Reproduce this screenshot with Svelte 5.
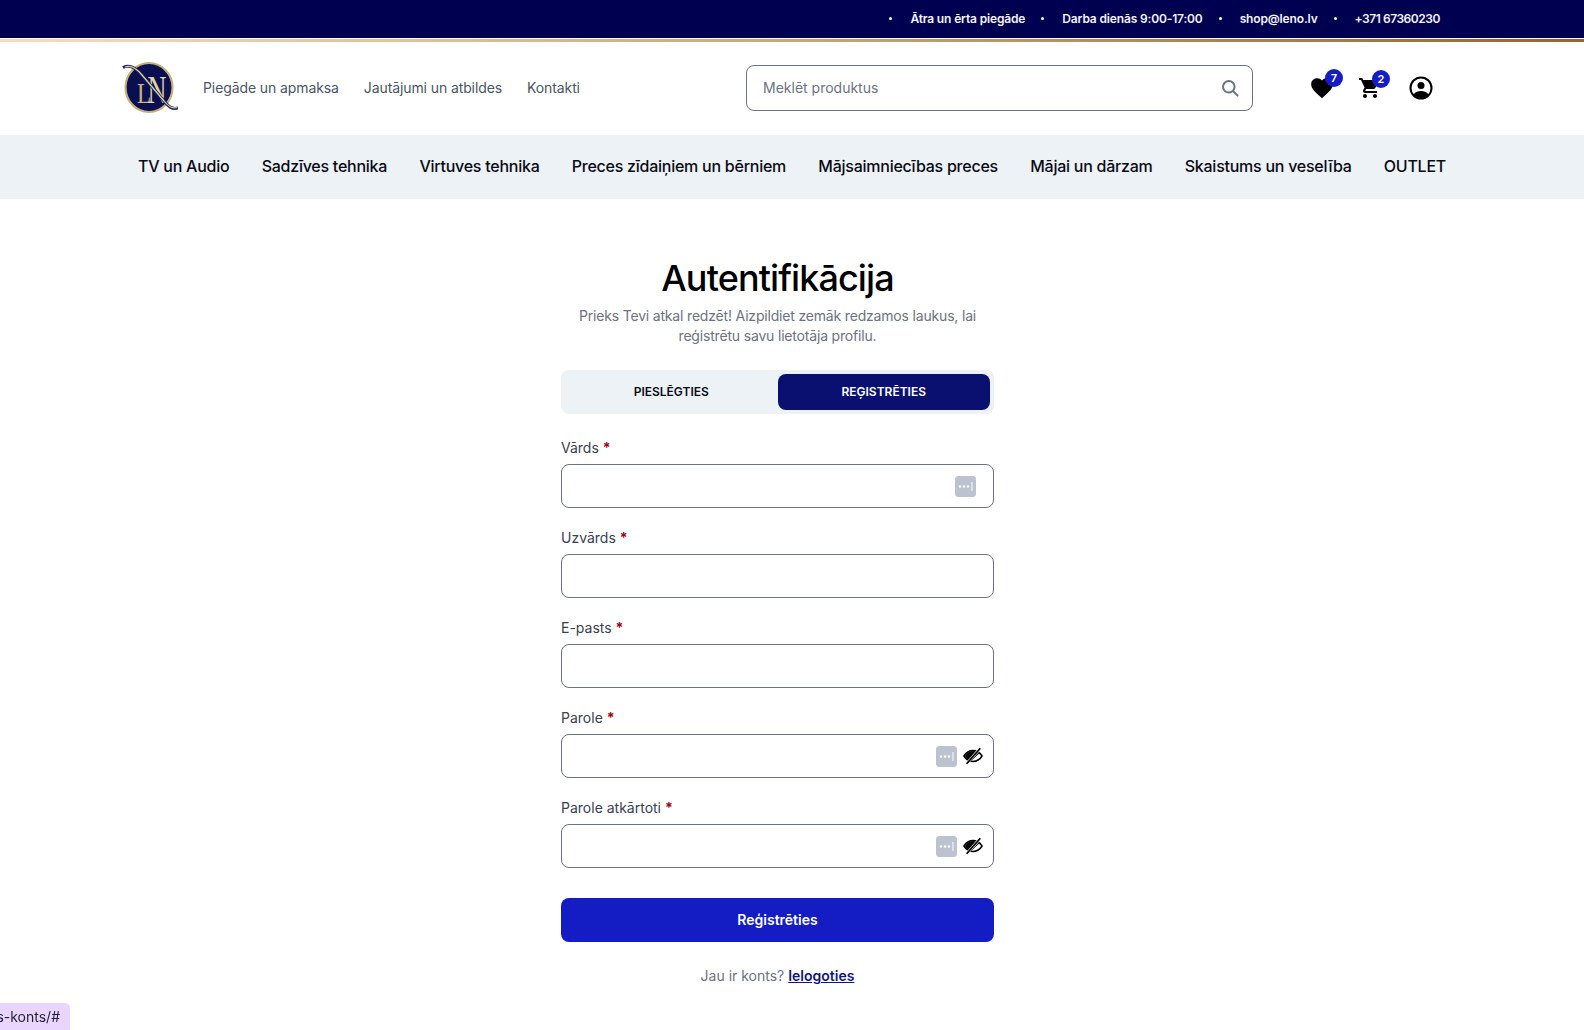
<script>
  const topItems = ['Ātra un ērta piegāde', 'Darba dienās 9:00-17:00', 'shop@leno.lv', '+371 67360230']
  const links = ['Piegāde un apmaksa', 'Jautājumi un atbildes', 'Kontakti']
  const categories = [
    'TV un Audio',
    'Sadzīves tehnika',
    'Virtuves tehnika',
    'Preces zīdaiņiem un bērniem',
    'Mājsaimniecības preces',
    'Mājai un dārzam',
    'Skaistums un veselība',
    'OUTLET'
  ]
  const fields = [
    { label: 'Vārds', key: true, eye: false },
    { label: 'Uzvārds', key: false, eye: false },
    { label: 'E-pasts', key: false, eye: false },
    { label: 'Parole', key: true, eye: true },
    { label: 'Parole atkārtoti', key: true, eye: true }
  ]
</script>

<div class="page">
  <div class="topbar">
    {#each topItems as item}
      <span class="top-item">{item}</span>
    {/each}
  </div>
  <div class="goldline"></div>

  <header class="head">
    <svg class="logo" viewBox="0 0 56 56" width="56" height="56" aria-label="Leno">
      <ellipse cx="27" cy="27.500" rx="23.500" ry="24.500" fill="#0a0f52" stroke="#c4b078" stroke-width="2.200" />
      <text transform="translate(15 42.500) scale(.8 1)" class="logo-l">L</text>
      <text transform="translate(25.500 42.500) scale(.64 1)" class="logo-n">N</text>
      <path d="M1 7.500 C8 4 14 8 20 15 L42 41 C46 46 50 50 56 48" fill="none" stroke="#23265f" stroke-width="3" />
      <path d="M3 7 C9 5 15 9 20 15 L42 41 C46 46 50 49 55 47.500" fill="none" stroke="#dcd09c" stroke-width="1.200" />
    </svg>
    <nav class="links">
      {#each links as link}
        <span>{link}</span>
      {/each}
    </nav>
    <div class="search">
      <span>Meklēt produktus</span>
      <svg viewBox="0 0 18 18" width="18" height="18">
        <circle cx="7.800" cy="7.800" r="5.800" fill="none" stroke="#6b7280" stroke-width="2" />
        <path d="M12 12l4.500 4.500" stroke="#6b7280" stroke-width="2" stroke-linecap="round" />
      </svg>
    </div>
    <div class="icons">
      <div class="icon">
        <svg viewBox="0 0 24 24" width="26" height="26">
          <path d="M12 21.350l-1.450-1.320C5.400 15.360 2 12.280 2 8.500 2 5.420 4.420 3 7.500 3c1.740 0 3.410.81 4.500 2.090C13.090 3.810 14.760 3 16.500 3 19.580 3 22 5.420 22 8.500c0 3.780-3.400 6.860-8.550 11.540L12 21.350z" />
        </svg>
        <b>7</b>
      </div>
      <div class="icon">
        <svg viewBox="0 0 24 24" width="24" height="24">
          <path d="M7 18c-1.100 0-1.990.9-1.990 2S5.900 22 7 22s2-.9 2-2-.9-2-2-2zM1 2v2h2l3.600 7.590-1.350 2.450c-.16.280-.25.610-.25.960 0 1.100.9 2 2 2h12v-2H7.420c-.14 0-.25-.11-.25-.25l.03-.12.900-1.630h7.450c.75 0 1.410-.41 1.750-1.030l3.580-6.490A1 1 0 0 0 20 4H5.210l-.94-2H1zm16 16c-1.100 0-1.990.9-1.990 2s.89 2 1.990 2 2-.9 2-2-.9-2-2-2z" />
        </svg>
        <b>2</b>
      </div>
      <svg class="user" viewBox="0 0 24 24" width="24" height="24">
        <circle cx="12" cy="12" r="10.500" fill="none" stroke="#000" stroke-width="2" />
        <circle cx="12" cy="9.500" r="3.500" />
        <path d="M4.500 18.500C6.500 15.800 9 15 12 15s5.500.8 7.500 3.500C17.500 20.800 15 22 12 22s-5.500-1.200-7.500-3.500z" />
      </svg>
    </div>
  </header>

  <nav class="cats">
    {#each categories as cat}
      <span>{cat}</span>
    {/each}
  </nav>

  <div class="content">
    <main class="auth">
      <h1>Autentifikācija</h1>
      <p class="lead">Prieks Tevi atkal redzēt! Aizpildiet zemāk redzamos laukus, lai reģistrētu savu lietotāja profilu.</p>

      <div class="tabs">
        <button type="button">PIESLĒGTIES</button>
        <button type="button" class="active">REĢISTRĒTIES</button>
      </div>

      <form>
        {#each fields as field}
          <div class="field">
            <div class="label">{field.label} <em>*</em></div>
            <div class="input">
              {#if field.key}
                <svg class="dots" viewBox="0 0 21 21" width="21" height="21">
                  <rect width="21" height="21" rx="3.500" fill="#bcc2cf" />
                  <circle cx="5" cy="10.500" r="1.200" fill="#fff" />
                  <circle cx="9" cy="10.500" r="1.200" fill="#fff" />
                  <circle cx="13" cy="10.500" r="1.200" fill="#fff" />
                  <path d="M17 6v9" stroke="#fff" stroke-width="1" />
                </svg>
              {/if}
              {#if field.eye}
                <svg class="eye" viewBox="0 0 22 20" width="20" height="20">
                  <path d="M1 10c2.500-4 6-6 10-6s7.500 2 10 6c-2.500 4-6 6-10 6s-7.500-2-10-6z" fill="none" stroke="#000" stroke-width="1.600" />
                  <path d="M2 10c2-3.500 5.500-5.500 9-5.500 3 0 5 .8 7 2.500L9 15.500C6 14.800 4 13 2 10z" />
                  <path d="M4 18.500L19 1.500" stroke="#fff" stroke-width="3" />
                  <path d="M4 18.500L19 1.500" stroke="#000" stroke-width="2" />
                </svg>
              {/if}
            </div>
          </div>
        {/each}
        <button type="button" class="submit">Reģistrēties</button>
      </form>

      <p class="switch">Jau ir konts? <a href="#login">Ielogoties</a></p>
    </main>
  </div>

  <div class="status"><span>s-konts/#</span></div>
</div>

<style>
  :global(body) {
    margin: 0;
    background: #fff;
  }

  .page {
    font-family: Inter, "Noto Sans", sans-serif;
    color: #000;
    height: 1030px;
    overflow: hidden;
  }

  .topbar {
    display: flex;
    justify-content: flex-end;
    align-items: center;
    gap: 16px;
    box-sizing: border-box;
    height: 38px;
    padding: 0 144px 1px 0;
    background: #000050;
    color: #f3f3fb;
    font-size: 12px;
    font-weight: 600;
    letter-spacing: -0.15px;
  }

  .top-item {
    display: flex;
    align-items: center;
    gap: 18px;
  }

  .top-item:last-child {
    letter-spacing: -0.45px;
  }

  .top-item::before {
    content: '';
    width: 3px;
    height: 3px;
    border-radius: 50%;
    background: #fff;
  }

  .goldline {
    height: 3px;
    margin-top: 1px;
    background: linear-gradient(90deg, #f3dfc0 0%, #c4a877 50%, #93662f 100%);
  }

  .head {
    display: flex;
    align-items: center;
    box-sizing: border-box;
    height: 93px;
    padding: 0 151px 2px 122px;
  }

  .logo {
    flex: none;
  }

  .logo-l {
    font-family: "Liberation Serif", serif;
    font-size: 29px;
    fill: #c9b57c;
  }

  .logo-n {
    font-family: "Liberation Serif", serif;
    font-size: 41px;
    fill: #e0d6a6;
  }

  .links {
    display: flex;
    gap: 25px;
    margin-left: 25px;
    font-size: 14px;
    letter-spacing: -0.1px;
    color: #4b5563;
  }

  .search {
    display: flex;
    align-items: center;
    justify-content: space-between;
    box-sizing: border-box;
    width: 507px;
    height: 46px;
    margin-left: auto;
    padding: 0 13px 0 16px;
    border: 1px solid #6b7280;
    border-radius: 8px;
    font-size: 14px;
    color: #6b7280;
  }

  .icons {
    display: flex;
    align-items: center;
    gap: 23px;
    margin-left: 56px;
    height: 30px;
  }

  .icon {
    position: relative;
    display: flex;
  }

  .icon b {
    position: absolute;
    top: -6px;
    right: -8px;
    display: grid;
    place-items: center;
    width: 18px;
    height: 18px;
    border-radius: 50%;
    background: #141cc4;
    color: #fff;
    font-size: 11px;
    font-weight: 600;
  }

  .user {
    margin-left: 4px;
  }

  .cats {
    display: flex;
    justify-content: space-between;
    align-items: center;
    box-sizing: border-box;
    height: 64px;
    padding: 0 138px 2px;
    background: #edf2f7;
    font-size: 16px;
    font-weight: 500;
    letter-spacing: -0.25px;
    color: #0a0a14;
  }

  .content {
    padding-right: 29px;
  }

  .auth {
    width: 433px;
    margin: 0 auto;
    text-align: center;
  }

  h1 {
    margin: 54px 0 0;
    font-size: 36px;
    line-height: 50px;
    font-weight: 500;
    letter-spacing: -0.9px;
  }

  .lead {
    margin: 3px 0 0;
    padding: 0 10px;
    font-size: 14px;
    line-height: 20px;
    letter-spacing: -0.18px;
    color: #6b7280;
  }

  .tabs {
    display: grid;
    grid-template-columns: 1fr 1fr;
    box-sizing: border-box;
    height: 44px;
    margin-top: 24px;
    padding: 4px;
    border-radius: 8px;
    background: #edf2f7;
  }

  .tabs button {
    padding: 0 0 2px;
    border: 0;
    border-radius: 8px;
    background: transparent;
    font: inherit;
    font-size: 12px;
    font-weight: 600;
    color: #0a0a14;
  }

  .tabs .active {
    background: #0a1070;
    color: #fff;
  }

  form {
    margin-top: 24px;
    text-align: left;
  }

  .field {
    margin-bottom: 20px;
  }

  .label {
    height: 20px;
    margin-bottom: 6px;
    font-size: 14px;
    line-height: 20px;
    color: #374151;
  }

  .label em {
    font-style: normal;
    font-weight: 700;
    color: #a00010;
  }

  .input {
    display: flex;
    align-items: center;
    justify-content: flex-end;
    gap: 6px;
    box-sizing: border-box;
    height: 44px;
    padding: 0 10px 0 0;
    border: 1px solid #6b7280;
    border-radius: 8px;
  }

  .input .dots:last-child {
    margin-right: 7px;
  }

  .submit {
    display: block;
    width: 100%;
    height: 44px;
    margin-top: 30px;
    padding: 0 0 2px;
    border: 0;
    border-radius: 8px;
    background: #141cc4;
    color: #fff;
    font: inherit;
    font-size: 14px;
    font-weight: 600;
  }

  .switch {
    margin: 24px 0 0;
    font-size: 14px;
    line-height: 20px;
    color: #6b7280;
  }

  .switch a {
    color: #10167e;
    font-weight: 600;
  }

  .status {
    position: fixed;
    left: 0;
    bottom: 0;
    display: flex;
    justify-content: flex-end;
    box-sizing: border-box;
    width: 70px;
    height: 27px;
    padding: 0 10px 0 0;
    border-top-right-radius: 5px;
    background: #e9d5ff;
    font-size: 14px;
    line-height: 28px;
    color: #1f1f2e;
    overflow: hidden;
    white-space: nowrap;
  }
</style>
